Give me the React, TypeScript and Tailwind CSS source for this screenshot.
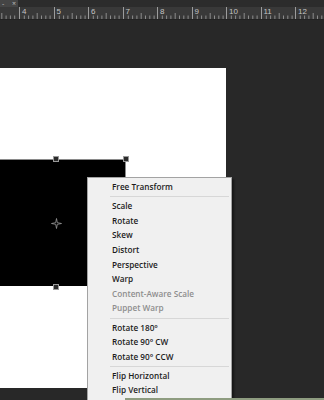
import React from "react";

// Photoshop-style canvas with the Free Transform context menu open

interface MenuEntry {
    label?: string;
    disabled?: boolean;
    separator?: boolean;
}

const menuEntries: MenuEntry[] = [
    { label: "Free Transform" },
    { separator: true },
    { label: "Scale" },
    { label: "Rotate" },
    { label: "Skew" },
    { label: "Distort" },
    { label: "Perspective" },
    { label: "Warp" },
    { label: "Content-Aware Scale", disabled: true },
    { label: "Puppet Warp", disabled: true },
    { separator: true },
    { label: "Rotate 180°" },
    { label: "Rotate 90° CW" },
    { label: "Rotate 90° CCW" },
    { separator: true },
    { label: "Flip Horizontal" },
    { label: "Flip Vertical" },
];

const rulerUnits = [4, 5, 6, 7, 8, 9, 10, 11, 12];

const RulerTicks = () => (
    <svg width="34.5" height="12" className="absolute left-0 top-0">
        {[1, 2, 3, 4, 5, 6, 7].map((i) => (
            <line
                key={i}
                x1={i * 4.3}
                x2={i * 4.3}
                y1={i === 4 ? 6 : 8.5}
                y2={12}
                stroke="#8c8c8c"
                strokeWidth="1"
            />
        ))}
    </svg>
);

const Handle = ({ className }: { className: string }) => (
    <div
        className={`absolute w-[6px] h-[6px] border border-[#9a9a9a] bg-[#2a2a2a] ${className}`}
    />
);

const App: React.FC = () => {
    return (
        <div className="relative w-[324px] h-[400px] overflow-hidden bg-[#282828] font-['Open_Sans',_'Noto_Sans',sans-serif]">
            {/* Tab strip */}
            <div className="flex h-[7px] bg-[#2c2c2c]">
                <div className="flex w-[18px] items-center justify-between bg-[#454545] px-[2px] text-[7px] leading-none text-[#bdbdbd]">
                    <span>-</span>
                    <span>×</span>
                </div>
            </div>

            {/* Ruler */}
            <div className="flex h-[13px] overflow-hidden border-b border-[#222] bg-[#393939]">
                <div className="relative w-[19px] shrink-0">
                    <svg width="19" height="12" className="absolute left-0 top-0">
                        {[1, 2, 3, 4].map((i) => (
                            <line key={i} x1={19 - i * 4.3} x2={19 - i * 4.3} y1={i === 4 ? 6 : 8.5} y2={12} stroke="#8c8c8c" />
                        ))}
                    </svg>
                </div>
                {rulerUnits.map((n) => (
                    <div key={n} className="relative h-[12px] w-[34.5px] shrink-0 border-l border-[#9c9c9c]">
                        <RulerTicks />
                        <span className="relative ml-[2px] block pt-[1px] font-['Liberation_Sans',sans-serif] text-[8px] leading-none text-[#c4c4c4]">
                            {n}
                        </span>
                    </div>
                ))}
            </div>

            {/* Canvas area */}
            <div className="pt-[48px]">
                <div className="h-[320px] w-[226px] bg-white pt-[91px]">
                    <div className="relative h-[127px] w-[126px] border-t border-r border-[#8a8a8a] bg-black">
                        <Handle className="left-[53px] top-[-4px]" />
                        <Handle className="right-[-4px] top-[-4px]" />
                        <Handle className="left-[53px] bottom-[-4px]" />
                        {/* reference point */}
                        <svg width="11" height="11" viewBox="0 0 11 11" className="absolute left-[51px] top-[58px]">
                            <path d="M5.5 0.5 L6.3 4.7 L10.5 5.5 L6.3 6.3 L5.5 10.5 L4.7 6.3 L0.5 5.5 L4.7 4.7 Z" fill="none" stroke="#9a9a9a" strokeWidth="0.8" />
                        </svg>
                    </div>
                </div>
            </div>

            {/* Context menu */}
            <div className="absolute left-[87px] top-[177px] w-[145px] border border-[#a3a3a3] bg-[#f0f0f0] pt-[2px] pb-[2px] shadow-[2px_2px_2px_rgba(0,0,0,0.45)]">
                {menuEntries.map((entry, idx) =>
                    entry.separator ? (
                        <div key={idx} className="flex h-[4.5px] items-center pl-[22px] pr-[2px]">
                            <div className="h-px w-full bg-[#d7d7d7]" />
                        </div>
                    ) : (
                        <div
                            key={idx}
                            className={`flex h-[14.6px] items-center pl-[24px] text-[8.2px] font-semibold leading-none ${
                                entry.disabled ? "text-[#8e8e8e]" : "text-[#1c1c1c]"
                            }`}
                        >
                            {entry.label}
                        </div>
                    )
                )}
            </div>

            {/* bottom strip */}
            <div className="absolute bottom-0 left-[125px] right-0 h-[2px] bg-[#8e9c80]" />
        </div>
    );
};

export default App;
